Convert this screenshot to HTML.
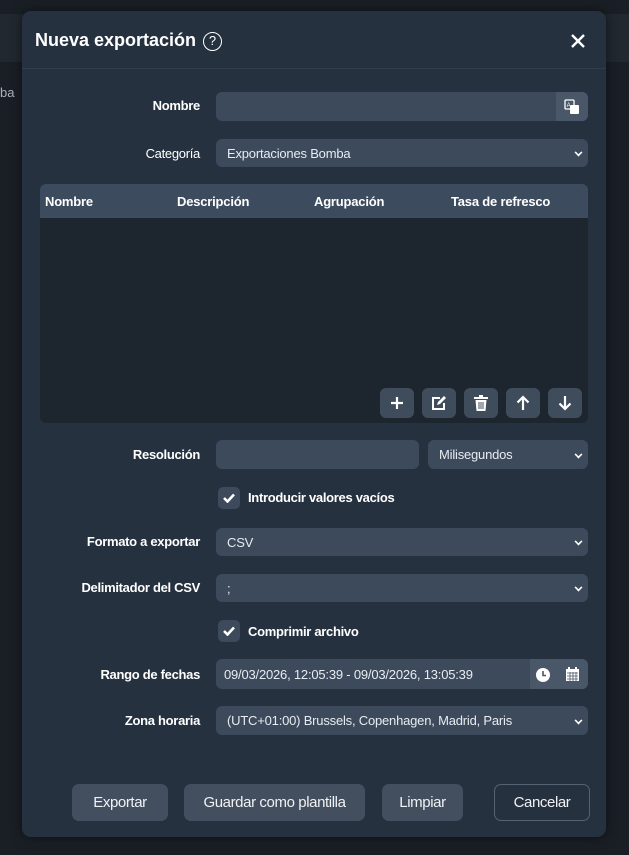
<!DOCTYPE html>
<html><head><meta charset="utf-8"><style>
*{box-sizing:border-box;margin:0;padding:0}
body{width:629px;height:855px;background:#1a1f26;font-family:"Liberation Sans",Arial,sans-serif;color:#fff;position:relative;overflow:hidden}
.a{position:absolute}
.band{left:0;top:14px;width:629px;height:48px;background:#222830}
.modal{left:22px;top:11px;width:584px;height:826px;background:#263140;border-radius:9px;box-shadow:0 0 12px rgba(0,0,0,.5)}
.lbl{font-size:13px;font-weight:bold;letter-spacing:-0.3px;text-align:right;width:190px;left:10px;line-height:16px}
.inp{background:#3c4a5c;border-radius:6px;font-size:13px;letter-spacing:-0.2px;color:#e8ecf0;padding-left:11px;display:flex;align-items:center}
.chev{position:absolute;right:6px;top:50%;margin-top:-4px;width:7px;height:7px;border-right:2px solid #fff;border-bottom:2px solid #fff;transform:rotate(45deg) scale(.8)}
.th{font-size:13px;font-weight:bold;letter-spacing:-0.2px;top:194px}
.tb{background:#3f4c5c;border-radius:6px;width:34px;height:30px;top:388px;display:flex;align-items:center;justify-content:center}
.cb{width:22px;height:22px;background:#3d4a5c;border-radius:5px;display:flex;align-items:center;justify-content:center}
.cbt{font-size:13px;font-weight:bold;letter-spacing:-0.3px}
.btn{top:784px;height:37px;border-radius:7px;background:#434f5f;font-size:15px;letter-spacing:-0.4px;display:flex;align-items:center;justify-content:center;color:#f0f2f4}
</style></head><body>
<div class="a band"></div>
<div class="a" style="left:0;top:85px;font-size:13px;color:#aab2bc">ba</div>
<div class="a modal"></div>
<div class="a" style="left:35px;top:30px;font-size:18px;font-weight:bold;letter-spacing:0">Nueva exportación</div>
<div class="a" style="left:203px;top:32px;width:19px;height:19px;border:1.5px solid #fff;border-radius:50%;font-size:13px;text-align:center;line-height:16px">?</div>
<svg class="a" style="left:571px;top:34px" width="14" height="14"><path d="M1 1L13 13M13 1L1 13" stroke="#fff" stroke-width="2.4"/></svg>
<div class="a" style="left:22px;top:68px;width:584px;height:1px;background:#323d4b"></div>

<div class="a lbl" style="top:98px">Nombre</div>
<div class="a inp" style="left:216px;top:92px;width:372px;height:29px"></div>
<div class="a" style="left:556px;top:92px;width:32px;height:29px;background:#4a5768;border-radius:0 6px 6px 0"></div>
<svg class="a" style="left:564px;top:99px" width="16" height="16"><rect x="1" y="1" width="9" height="9" rx="1" fill="none" stroke="#fff" stroke-width="1.3"/><rect x="6" y="6" width="9" height="9" rx="1" fill="#fff"/><text x="2.6" y="8" font-size="6" fill="#fff" font-family="Liberation Sans">A</text></svg>

<div class="a lbl" style="top:146px;font-weight:normal">Categoría</div>
<div class="a inp" style="left:216px;top:139px;width:372px;height:28px">Exportaciones Bomba<div class="chev"></div></div>

<div class="a" style="left:40px;top:184px;width:548px;height:239px;background:#1d252f;border-radius:6px"></div>
<div class="a" style="left:40px;top:184px;width:548px;height:34px;background:#3d4b5e;border-radius:6px 6px 0 0"></div>
<div class="a th" style="left:45px">Nombre</div>
<div class="a th" style="left:177px">Descripción</div>
<div class="a th" style="left:314px">Agrupación</div>
<div class="a th" style="left:451px">Tasa de refresco</div>

<div class="a tb" style="left:380px"><svg width="14" height="14"><path d="M7 1V13M1 7H13" stroke="#fff" stroke-width="2.2"/></svg></div>
<div class="a tb" style="left:422px"><svg width="16" height="16"><path d="M9 3H2V14H13V8" fill="none" stroke="#fff" stroke-width="2"/><path d="M6 10L7 7L13 1L15 3L9 9Z" fill="#fff"/></svg></div>
<div class="a tb" style="left:464px"><svg width="14" height="16"><rect x="0" y="2" width="14" height="2" fill="#fff"/><rect x="5" y="0" width="4" height="2" fill="#fff"/><path d="M1.5 5H12.5L11.5 16H2.5Z" fill="#fff"/><path d="M5 7V14M7 7V14M9 7V14" stroke="#3f4c5c" stroke-width="1"/></svg></div>
<div class="a tb" style="left:506px"><svg width="14" height="16"><path d="M7 15V2M1.5 7.5L7 2L12.5 7.5" fill="none" stroke="#fff" stroke-width="2.2"/></svg></div>
<div class="a tb" style="left:548px"><svg width="14" height="16"><path d="M7 1V14M1.5 8.5L7 14L12.5 8.5" fill="none" stroke="#fff" stroke-width="2.2"/></svg></div>

<div class="a lbl" style="top:447px">Resolución</div>
<div class="a inp" style="left:216px;top:440px;width:203px;height:29px"></div>
<div class="a inp" style="left:428px;top:440px;width:160px;height:29px">Milisegundos<div class="chev"></div></div>

<div class="a cb" style="left:218px;top:487px"><svg width="12" height="10"><path d="M1 5L4.5 8.5L11 1.5" fill="none" stroke="#fff" stroke-width="2.6"/></svg></div>
<div class="a cbt" style="left:248px;top:490px">Introducir valores vacíos</div>

<div class="a lbl" style="top:534px">Formato a exportar</div>
<div class="a inp" style="left:216px;top:528px;width:372px;height:28px">CSV<div class="chev"></div></div>

<div class="a lbl" style="top:580px">Delimitador del CSV</div>
<div class="a inp" style="left:216px;top:574px;width:372px;height:28px">;<div class="chev"></div></div>

<div class="a cb" style="left:218px;top:620px"><svg width="12" height="10"><path d="M1 5L4.5 8.5L11 1.5" fill="none" stroke="#fff" stroke-width="2.6"/></svg></div>
<div class="a cbt" style="left:248px;top:624px">Comprimir archivo</div>

<div class="a lbl" style="top:667px">Rango de fechas</div>
<div class="a inp" style="left:216px;top:659px;width:372px;height:30px;padding-left:8px">09/03/2026, 12:05:39 - 09/03/2026, 13:05:39</div>
<div class="a" style="left:530px;top:659px;width:58px;height:30px;background:#4a5768;border-radius:0 6px 6px 0"></div>
<svg class="a" style="left:535px;top:667px" width="16" height="16"><circle cx="8" cy="8" r="7" fill="#fff"/><path d="M8 4V8.5H11" fill="none" stroke="#4a5768" stroke-width="1.6"/></svg>
<svg class="a" style="left:565px;top:666px" width="15" height="16"><rect x="1" y="3" width="13" height="12" fill="#fff"/><rect x="3" y="1" width="2" height="3" fill="#fff"/><rect x="10" y="1" width="2" height="3" fill="#fff"/><path d="M2 7H13M2 10H13M2 13H13M5 6V15M8 6V15M11 6V15" stroke="#4a5768" stroke-width=".8"/></svg>

<div class="a lbl" style="top:713px">Zona horaria</div>
<div class="a inp" style="left:216px;top:706px;width:372px;height:29px">(UTC+01:00) Brussels, Copenhagen, Madrid, Paris<div class="chev"></div></div>

<div class="a btn" style="left:72px;width:96px">Exportar</div>
<div class="a btn" style="left:184px;width:181px">Guardar como plantilla</div>
<div class="a btn" style="left:382px;width:81px">Limpiar</div>
<div class="a btn" style="left:494px;width:96px;background:transparent;border:1px solid #556272">Cancelar</div>
</body></html>
